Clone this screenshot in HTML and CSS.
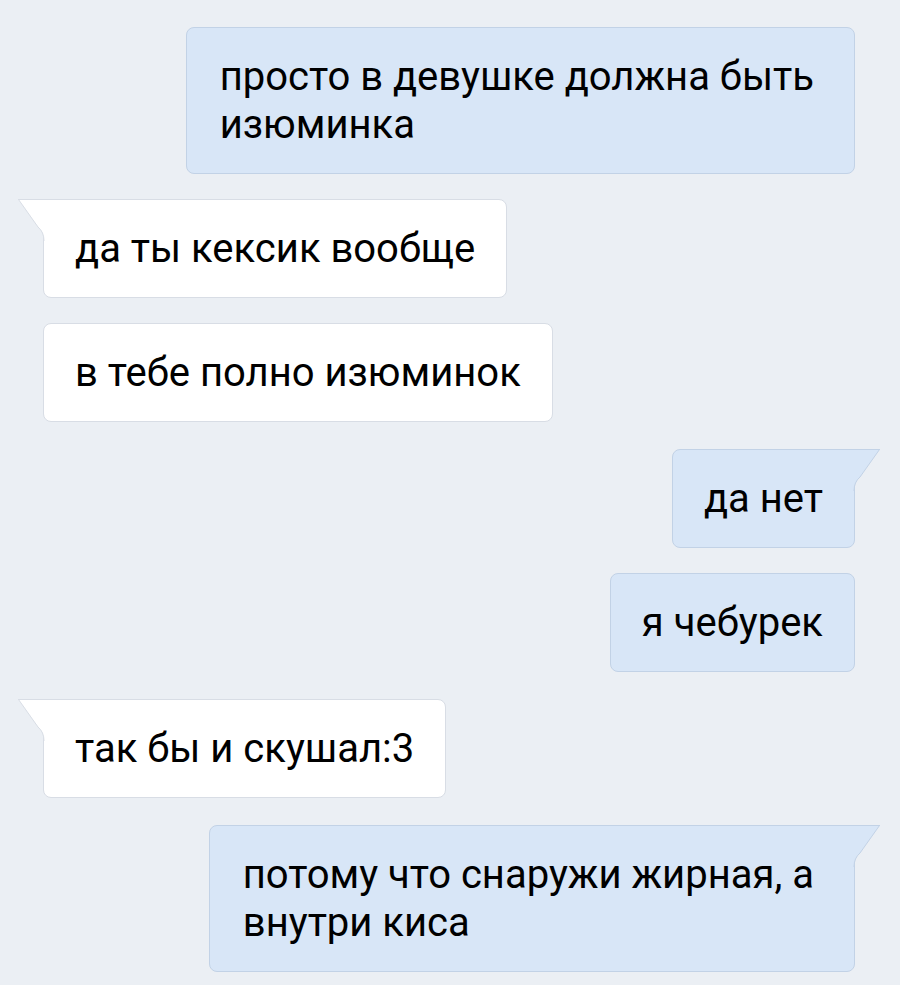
FILE: index.html
```html
<!DOCTYPE html>
<html lang="ru">
<head>
  <meta charset="UTF-8" />
  <title>Диалог</title>
  <link rel="stylesheet" href="styles.css">
</head>
<body>

  <div class="chat">
    <div class="mensagem saida longa">просто в девушке должна быть<br>изюминка</div>

    <div class="mensagem entrada cauda">
      <svg class="rabo" width="27" height="42" viewBox="0 0 27 42"><path d="M0.5 0.5 H27 V42 H26 Q26 33 20 28 Z" fill="#ffffff"/><path d="M0 0.5 H27 M0.5 0.5 L20 28 Q26 33 26 42" fill="none" stroke="#d8dde5"/></svg>
      да ты кексик вообще
    </div>
    <div class="mensagem entrada">в тебе полно изюминок</div>

    <div class="mensagem saida cauda grupo">
      <svg class="rabo" width="27" height="42" viewBox="0 0 27 42"><path d="M26.5 0.5 H0 V42 H1 Q1 33 7 28 Z" fill="#d8e6f7"/><path d="M27 0.5 H0 M26.5 0.5 L7 28 Q1 33 1 42" fill="none" stroke="#c2d2e6"/></svg>
      да нет
    </div>
    <div class="mensagem saida">я чебурек</div>

    <div class="mensagem entrada cauda grupo">
      <svg class="rabo" width="27" height="42" viewBox="0 0 27 42"><path d="M0.5 0.5 H27 V42 H26 Q26 33 20 28 Z" fill="#ffffff"/><path d="M0 0.5 H27 M0.5 0.5 L20 28 Q26 33 26 42" fill="none" stroke="#d8dde5"/></svg>
      так бы и скушал:3
    </div>

    <div class="mensagem saida cauda grupo longa">
      <svg class="rabo" width="27" height="42" viewBox="0 0 27 42"><path d="M26.5 0.5 H0 V42 H1 Q1 33 7 28 Z" fill="#d8e6f7"/><path d="M27 0.5 H0 M26.5 0.5 L7 28 Q1 33 1 42" fill="none" stroke="#c2d2e6"/></svg>
      потому что снаружи жирная, а<br>внутри киса
    </div>
  </div>

</body>
</html>
```

FILE: styles.css
```css
* {
  box-sizing: border-box;
  margin: 0;
  padding: 0;
}

body {
  font-family: Roboto, 'Noto Sans', sans-serif;
  background-color: #ebeff4;
  height: 100vh;
  overflow: hidden;
}

.chat {
  display: flex;
  flex-direction: column;
  gap: 25px;
  padding: 27px 45px 0 43px;
}

.mensagem {
  position: relative;
  padding: 25px 31px 24px 31px;
  border-radius: 8px;
  font-size: 40px;
  line-height: 48px;
  color: #000000;
  white-space: nowrap;
  border: 1px solid transparent;
}

.longa {
  padding-right: 40px;
  padding-left: 33px;
}

.entrada {
  align-self: flex-start;
  background-color: #ffffff;
  border-color: #d8dde5;
}

.saida {
  align-self: flex-end;
  background-color: #d8e6f7;
  border-color: #c2d2e6;
}

.grupo {
  margin-top: 2px;
}

.rabo {
  position: absolute;
  top: -1px;
  display: block;
}

.entrada.cauda {
  border-top-left-radius: 0;
}

.entrada .rabo {
  left: -26px;
}

.saida.cauda {
  border-top-right-radius: 0;
}

.saida .rabo {
  right: -26px;
}
```
